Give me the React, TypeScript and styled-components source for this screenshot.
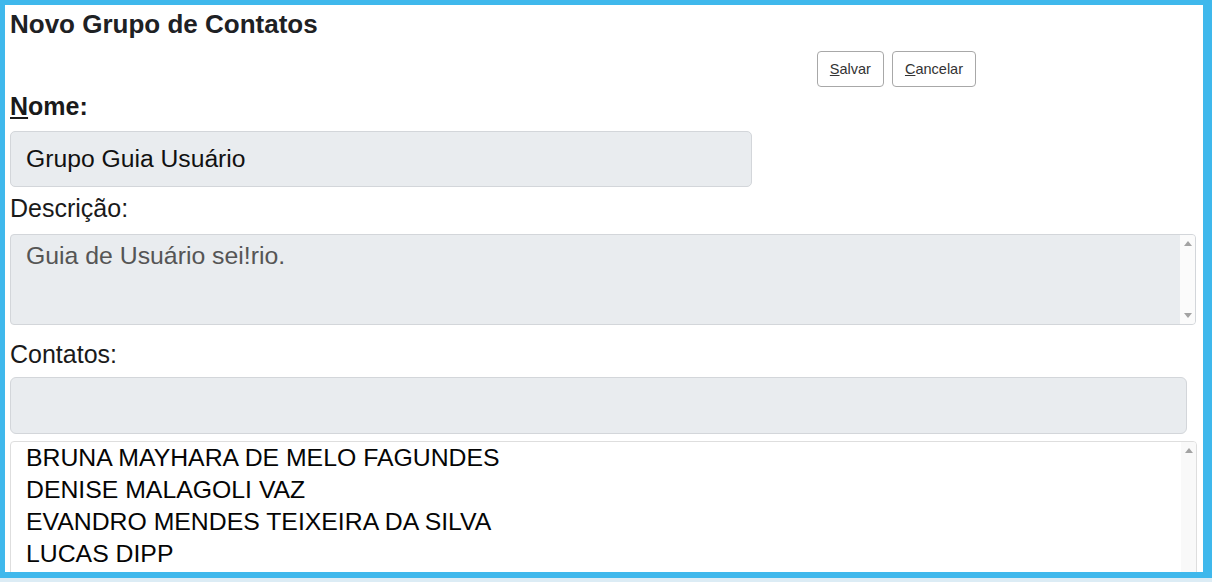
import React from 'react'
import styled, { createGlobalStyle } from 'styled-components'

const GlobalStyle = createGlobalStyle`
  html, body {
    margin: 0;
    padding: 0;
    background: #dcecf5;
  }
  body {
    font-family: "Liberation Sans", Arial, sans-serif;
    color: #1f1f1f;
  }
  * { box-sizing: border-box; }
`

const Frame = styled.div`
  width: 1212px;
  height: 578px;
  border-style: solid;
  border-color: #3fb8ec;
  border-width: 5px 9px 6px 5px;
  background: #fff;
  overflow: hidden;
  padding: 4px 0 0 5px;
`

const Title = styled.h1`
  margin: 0;
  font-size: 26px;
  line-height: 30px;
  font-weight: bold;
  color: #1e2124;
`

const Toolbar = styled.div`
  display: flex;
  justify-content: flex-end;
  gap: 8px;
  width: 966px;
  margin-top: 12px;
`

const Button = styled.button`
  height: 36px;
  padding: 0 12px;
  background: #fff;
  border: 1px solid #a8a8a8;
  border-radius: 4px;
  font-family: "Liberation Sans", Arial, sans-serif;
  font-size: 14.5px;
  color: #333;
  cursor: pointer;
`

const Label = styled.label<{ $bold?: boolean }>`
  display: block;
  font-size: 25px;
  line-height: 29px;
  font-weight: ${p => (p.$bold ? 'bold' : 'normal')};
  color: #1a1a1a;
  margin-top: ${p => (p.$bold ? '5px' : '7px')};
`

const TextInput = styled.input<{ $width: number }>`
  display: block;
  width: ${p => p.$width}px;
  height: 56px;
  margin-top: 10px;
  padding: 0 15px;
  background: #e9ecef;
  border: 1px solid #d3d6da;
  border-radius: 5px;
  font-family: "Liberation Sans", Arial, sans-serif;
  font-size: 24.7px;
  color: #111;
  outline: none;
`

const AreaBox = styled.div`
  display: flex;
  width: 1186px;
  height: 91px;
  margin-top: 11px;
  background: #e9ecef;
  border: 1px solid #d3d6da;
  border-radius: 4px;
  overflow: hidden;
`

const Area = styled.textarea`
  flex: 1;
  border: none;
  background: transparent;
  resize: none;
  overflow: hidden;
  padding: 6px 15px;
  font-family: "Liberation Sans", Arial, sans-serif;
  font-size: 24.8px;
  line-height: 29px;
  color: #555;
  outline: none;
`

const Track = styled.div<{ $bg: string }>`
  width: 15px;
  flex-shrink: 0;
  background: ${p => p.$bg};
  display: flex;
  flex-direction: column;
  justify-content: space-between;
  align-items: center;
  padding: 6px 0;
`

const Arrow = styled.span<{ $down?: boolean }>`
  width: 0;
  height: 0;
  border-left: 4.5px solid transparent;
  border-right: 4.5px solid transparent;
  ${p =>
    p.$down
      ? 'border-top: 5px solid #a3a3a3;'
      : 'border-bottom: 5px solid #a3a3a3;'}
`

const ContactsLabel = styled(Label)`
  margin-top: 15px;
`

const SearchInput = styled(TextInput)`
  margin-top: 8px;
  height: 57px;
  border-radius: 6px;
`

const ListBox = styled.div`
  display: flex;
  width: 1187px;
  height: 160px;
  margin-top: 7px;
  background: #fff;
  border: 1px solid #dedede;
  border-radius: 4px;
  overflow: hidden;
`

const Items = styled.ul`
  flex: 1;
  margin: 0;
  padding: 0 0 0 15px;
  list-style: none;
`

const Item = styled.li`
  font-size: 24.8px;
  line-height: 32px;
  color: #050505;
`

const contacts = [
  'BRUNA MAYHARA DE MELO FAGUNDES',
  'DENISE MALAGOLI VAZ',
  'EVANDRO MENDES TEIXEIRA DA SILVA',
  'LUCAS DIPP',
]

export default function App() {
  return (
    <>
      <GlobalStyle />
      <Frame>
        <Title>Novo Grupo de Contatos</Title>
        <Toolbar>
          <Button type="button"><u>S</u>alvar</Button>
          <Button type="button"><u>C</u>ancelar</Button>
        </Toolbar>
        <Label $bold htmlFor="nome"><u>N</u>ome:</Label>
        <TextInput id="nome" $width={742} value="Grupo Guia Usuário" readOnly />
        <Label htmlFor="descricao">Descrição:</Label>
        <AreaBox>
          <Area id="descricao" value="Guia de Usuário sei!rio." readOnly />
          <Track $bg="#fbfbfb">
            <Arrow />
            <Arrow $down />
          </Track>
        </AreaBox>
        <ContactsLabel>Contatos:</ContactsLabel>
        <SearchInput $width={1177} value="" readOnly />
        <ListBox>
          <Items>
            {contacts.map(name => (
              <Item key={name}>{name}</Item>
            ))}
          </Items>
          <Track $bg="#f9f9f9">
            <Arrow />
          </Track>
        </ListBox>
      </Frame>
    </>
  )
}
